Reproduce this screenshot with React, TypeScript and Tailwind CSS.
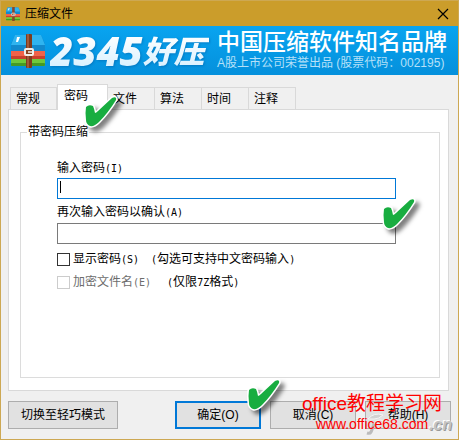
import { useState } from "react";

const TABS = ["常规", "密码", "文件", "算法", "时间", "注释"];

function ArchiveIcon({ className }: { className: string }) {
    return (
        <svg viewBox="0 0 36 34" className={className} aria-hidden="true">
            <path d="M5 1h26l4 9v8H1v-8z" fill="#1289cd" />
            <path d="M5 1h26l4 10H1z" fill="#2fb4f0" />
            <path d="M7 3h3L8 8H6z" fill="#fff" />
            <rect x="1" y="17" width="34" height="8" fill="#f0624a" />
            <rect x="1" y="22" width="34" height="3" fill="#c9402c" />
            <rect x="1" y="25" width="34" height="7" rx="1" fill="#6fc93c" />
            <rect x="1" y="29" width="34" height="3" rx="1" fill="#459a25" />
            <rect x="16" y="0" width="6" height="34" rx="1" fill="#7d3c1e" />
            <rect x="17" y="0" width="2" height="34" fill="#a3593a" />
            <rect x="15" y="15" width="8" height="6" rx="1" fill="#8a4524" stroke="#f3eee8" strokeWidth="2" />
            <path d="M18 18h4" stroke="#f3eee8" strokeWidth="1.5" />
        </svg>
    );
}

function CheckMark({ className }: { className: string }) {
    return (
        <svg
            viewBox="0 0 46 42"
            className={`pointer-events-none absolute h-[42px] w-[46px] drop-shadow-[4px_4px_2px_rgba(0,0,0,0.5)] ${className}`}
            aria-hidden="true"
        >
            <path
                d="M5 14Q8 11 12 13Q13 15 14 20Q15 20 17 18L31 5Q36 3 35 7Q27 20 18 29Q13 34 9 33Q5 31 5 27Q4 20 5 14z"
                fill="#18ad40"
                stroke="#fff"
                strokeWidth="3"
                strokeLinejoin="round"
                paintOrder="stroke"
            />
        </svg>
    );
}

function Latin({ children }: { children: string }) {
    return <span className="font-['DejaVu_Sans_Mono',monospace] text-[10px] leading-none">{children}</span>;
}

export default function App() {
    const [tab, setTab] = useState("密码");
    const [password, setPassword] = useState("");

    return (
        <div className="relative border border-[#cda853] bg-[#f0f0f0] font-['Liberation_Sans','Noto_Sans_CJK_SC',sans-serif] text-xs text-black">
            {/* Title bar */}
            <header className="flex h-[25px] items-center bg-[#cb9d2b] pl-1 pr-[5px]">
                <ArchiveIcon className="h-[14px] w-4" />
                <h1 className="ml-1 flex-1 text-xs">压缩文件</h1>
                <button type="button" aria-label="关闭" className="p-1">
                    <svg viewBox="0 0 12 12" className="size-3" aria-hidden="true">
                        <path d="M1 1l10 10M11 1L1 11" stroke="#000" strokeWidth="1.2" />
                    </svg>
                </button>
            </header>

            {/* Banner */}
            <div className="flex h-[49px] items-center justify-between bg-linear-to-b from-[#08a4f0] to-[#0590dc] pl-[9px] pr-[11px] text-white">
                <div className="flex items-center gap-1">
                    <ArchiveIcon className="h-[34px] w-9" />
                    <p className="flex items-center whitespace-nowrap font-['Open_Sans','Noto_Sans_CJK_SC',sans-serif] font-extrabold italic leading-8 drop-shadow-[1px_1px_1px_rgba(0,80,150,0.4)]">
                        <span className="bg-linear-to-b from-white to-[#d9f1ff] bg-clip-text text-[40px] text-transparent">2345</span>
                        <span className="bg-linear-to-b from-white to-[#d9f1ff] bg-clip-text pr-1 text-[31px] text-transparent">好压</span>
                    </p>
                </div>
                <div className="whitespace-nowrap">
                    <p className="text-[23px] font-medium leading-6">中国压缩软件知名品牌</p>
                    <p className="mt-px text-xs leading-4 text-[#b5e0f8]">A股上市公司荣誉出品 (股票代码：002195)</p>
                </div>
            </div>

            <main className="px-[7px] pt-[9px]">
                <div role="tablist" className="relative flex items-end pl-[2px]">
                    {TABS.map((name) => (
                        <button
                            key={name}
                            type="button"
                            role="tab"
                            aria-selected={tab === name}
                            onClick={() => setTab(name)}
                            className={
                                tab === name
                                    ? "-mb-px h-[26px] w-[51px] border border-b-0 border-[#d9d9d9] bg-white pb-1 pl-[6px] text-left"
                                    : "h-[22px] w-[47px] border border-b-0 border-l-0 border-[#d9d9d9] pl-[5px] text-left first:border-l"
                            }
                        >
                            {name}
                        </button>
                    ))}
                </div>

                <div className="mr-[2px] border border-[#d9d9d9] bg-white pb-3 pl-[11px] pr-2 pt-[14px]">
                    <fieldset className="h-[254px] border border-[#dcdcdc] pl-9 pr-[43px]">
                        <legend className="-ml-[30px] px-px leading-4">带密码压缩</legend>
                        <label htmlFor="password" className="mt-5 block h-4 leading-4">输入密码<Latin>(I)</Latin></label>
                        <div className="relative mt-[2px]">
                            <input
                                id="password"
                                type="password"
                                value={password}
                                onChange={(e) => setPassword(e.target.value)}
                                className="block h-[21px] w-full border border-[#0078d7] px-[3px] caret-transparent outline-none"
                            />
                            {password === "" && <span className="pointer-events-none absolute left-[3px] top-[3px] h-3 w-px bg-black" />}
                        </div>
                        <label htmlFor="confirm" className="mt-[5px] block h-4 leading-4">再次输入密码以确认<Latin>(A)</Latin></label>
                        <input id="confirm" type="password" className="mt-[3px] block h-[21px] w-full border border-[#7a7a7a] px-1 outline-none" />
                        <div className="mt-[7px] flex h-4 items-center whitespace-nowrap">
                            <input id="show" type="checkbox" className="size-[13px] appearance-none border border-[#333] bg-white checked:bg-[#0078d7]" />
                            <label htmlFor="show" className="ml-[3px]">显示密码<Latin>(S)</Latin></label>
                            <span className="ml-3"><Latin>(</Latin>勾选可支持中文密码输入<Latin>)</Latin></span>
                        </div>
                        <div className="mt-[7px] flex h-4 items-center whitespace-nowrap">
                            <input id="names" type="checkbox" disabled className="size-[13px] appearance-none border border-[#ccc] bg-white" />
                            <label htmlFor="names" className="ml-[3px] text-[#6d6d6d]">加密文件名<Latin>(E)</Latin></label>
                            <span className="ml-4"><Latin>(</Latin>仅限<Latin>7Z</Latin>格式<Latin>)</Latin></span>
                        </div>
                    </fieldset>
                </div>
            </main>

            <footer className="flex items-center justify-between px-[7px] pb-[10px] pt-[10px]">
                <button type="button" className="h-7 w-[110px] border border-[#adadad] bg-[#e1e1e1]">切换至轻巧模式</button>
                <div className="flex gap-[9px]">
                    <button type="button" className="h-7 w-[86px] border-2 border-[#0078d7] bg-[#e1e1e1]">确定(O)</button>
                    <button type="button" className="h-7 w-[86px] border border-[#adadad] bg-[#e1e1e1]">取消(C)</button>
                    <button type="button" className="h-7 w-[86px] border border-[#adadad] bg-[#e1e1e1]">帮助(H)</button>
                </div>
            </footer>

            <CheckMark className="left-[80px] top-[92px]" />
            <CheckMark className="right-[33px] top-[194px]" />
            <CheckMark className="bottom-[21px] left-[243px]" />

            {/* Watermarks */}
            <div className="pointer-events-none absolute bottom-1 right-[6px] flex w-[86px] items-end justify-between text-base font-bold italic leading-5 text-[#c4c4c4] [text-shadow:1px_1px_0_#999,-1px_-1px_0_#fff]">
                <svg viewBox="0 0 20 24" className="h-6 w-5" aria-hidden="true">
                    <path d="M2 8Q8 1 17 4Q13 8 8 8zM10 10Q14 8 18 10L12 13z" fill="#d2d2d2" stroke="#f4f4f4" />
                    <path d="M8 13Q6 19 5 21Q4 23 1 22" fill="none" stroke="#bbb" strokeWidth="3" />
                </svg>
                <span>.cn</span>
            </div>
            <div className="pointer-events-none absolute bottom-[7px] right-4 whitespace-nowrap text-center text-[#ff0000]">
                <p className="text-[19px] leading-6">office教程学习网</p>
                <p className="text-sm leading-4">www.office68.com</p>
            </div>
        </div>
    );
}
